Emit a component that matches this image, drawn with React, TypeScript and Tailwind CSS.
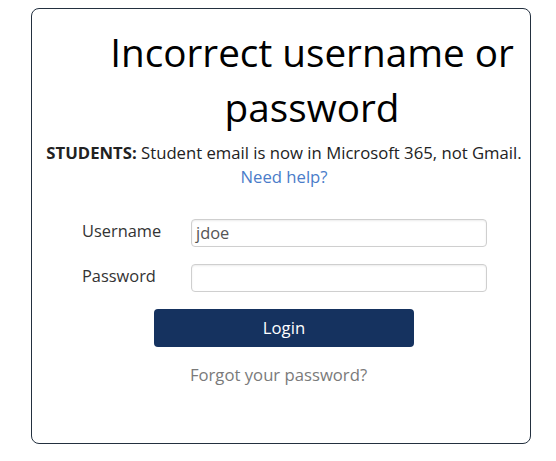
import React from "react";

export default function App() {
  return (
    <div className="w-[556px] h-[461px] bg-white" style={{ fontFamily: '"Open Sans", sans-serif' }}>
      <div className="pt-2 pl-[31px]">
        <div className="w-[500px] h-[436px] border border-[#23303f] rounded-lg pt-[16px] flex flex-col items-center">
          <h1 className="w-full pl-[62px] text-center text-[38.7px] leading-[55px] text-black font-normal">
            Incorrect username or password
          </h1>
          <p className="mt-[6px] w-full pl-[6px] text-center text-[16.7px] leading-[24px] text-[#222]">
            <span className="font-bold">STUDENTS:</span> Student email is now in Microsoft 365, not Gmail.
            <br />
            <a className="text-[#4a7cc9]">Need help?</a>
          </p>
          <div className="mt-[30px] w-full flex flex-col gap-[17px]">
            <div className="flex items-center h-[28px]">
              <label className="w-[110px] pl-[50px] pb-[4px] leading-[20px] text-[16.4px] text-[#333] shrink-0 whitespace-nowrap">Username</label>
              <div className="ml-[49px] w-[296px] h-[28px] border border-[#cfcfcf] rounded-[4px] shadow-[inset_0_1px_2px_rgba(0,0,0,0.08)] flex items-center pl-[4px] text-[16.4px] text-[#555]">
                jdoe
              </div>
            </div>
            <div className="flex items-center h-[28px]">
              <label className="w-[110px] pl-[50px] pb-[4px] leading-[20px] text-[16.4px] text-[#333] shrink-0 whitespace-nowrap">Password</label>
              <div className="ml-[49px] w-[296px] h-[28px] border border-[#cfcfcf] rounded-[4px] shadow-[inset_0_1px_2px_rgba(0,0,0,0.08)]"></div>
            </div>
          </div>
          <button className="self-start ml-[122px] mt-[17px] w-[260px] h-[38px] rounded-[4px] bg-[#15325f] text-white text-[16.7px] leading-[24px]">
            Login
          </button>
          <div className="mt-[16px] pr-[5px] text-[16.7px] leading-[24px] text-[#7a7a7a]">Forgot your password?</div>
        </div>
      </div>
    </div>
  );
}
